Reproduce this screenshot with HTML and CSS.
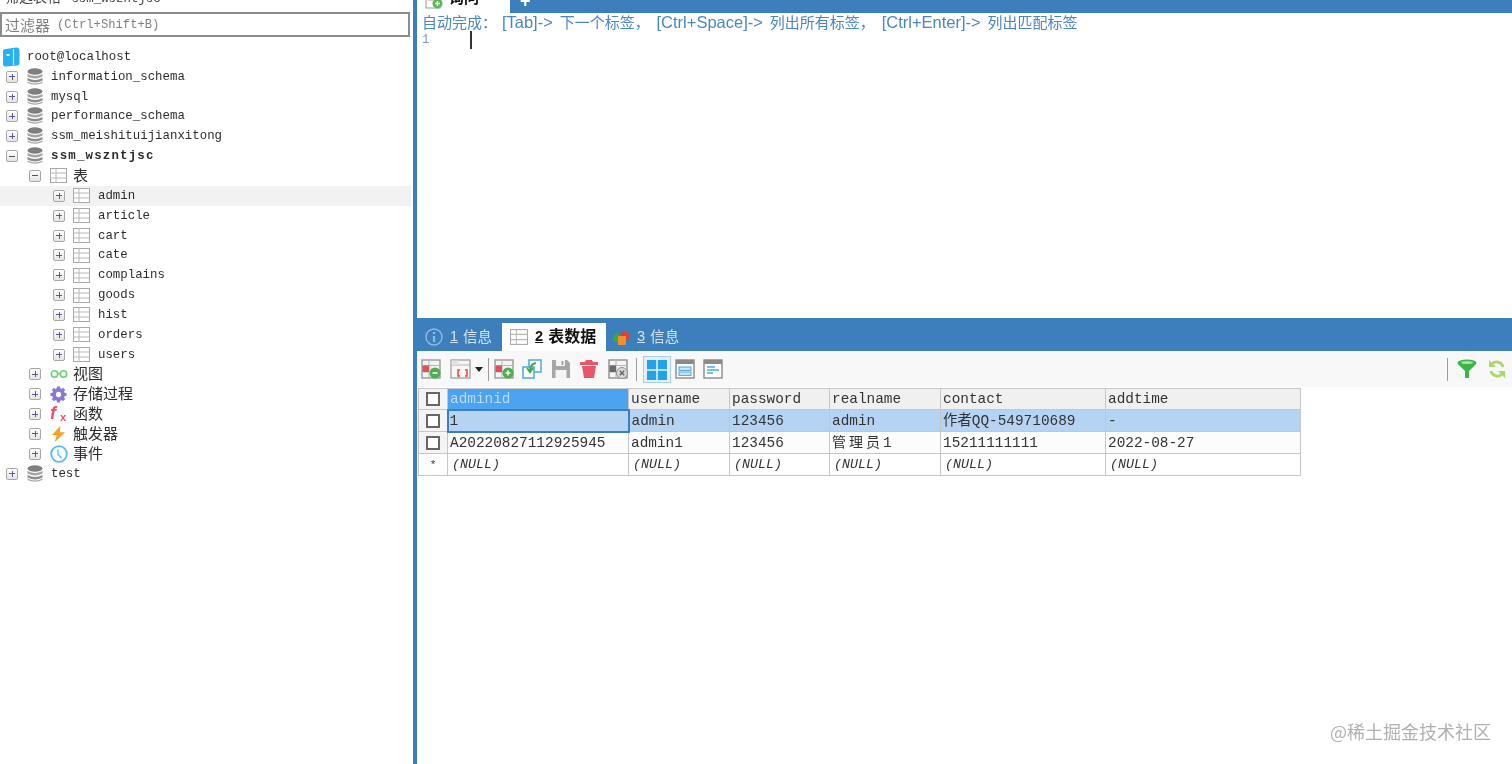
FILE: index.html
```html
<!DOCTYPE html>
<html lang="zh-CN">
<head>
  <meta charset="UTF-8" />
  <title>SQLyog</title>
  <link rel="stylesheet" href="styles.css">
</head>
<body>

  <!-- shared icons -->
  <svg class="sprites" width="0" height="0">
    <symbol id="i-server" viewBox="0 0 18 20">
      <path d="M1 4 Q1 2 4 2 L14 .6 Q17.5 .4 17.5 4 L17.5 16 Q17.5 18.5 14 18.6 L4 19.6 Q1 19.6 1 17 Z" fill="#29b0f2"/>
      <path d="M11.5 2 L11.5 18" stroke="#bfe8fb" stroke-width="1.2"/>
      <rect x="4.5" y="7" width="3" height="2" fill="#d8f2fd"/>
    </symbol>
    <symbol id="i-db" viewBox="0 0 16 18">
      <ellipse cx="8" cy="3.5" rx="7.5" ry="3.2" fill="#7f7f7f"/>
      <path d="M.5 6 Q8 10 15.5 6 V8.5 Q8 12.5 .5 8.5 Z" fill="#a3a3a3"/>
      <path d="M.5 10 Q8 14 15.5 10 V12.5 Q8 16.5 .5 12.5 Z" fill="#8c8c8c"/>
      <path d="M.5 13.5 Q8 17.5 15.5 13.5 V15 Q8 18.5 .5 15 Z" fill="#a8a8a8"/>
    </symbol>
    <symbol id="i-table" viewBox="0 0 17 15">
      <rect x=".5" y=".5" width="16" height="14" fill="#fff" stroke="#a9a9a9"/>
      <path d="M.5 5 H16.5 M.5 10 H16.5 M6 .5 V14.5" stroke="#b8b8b8" fill="none"/>
    </symbol>
    <symbol id="i-view" viewBox="0 0 18 10">
      <circle cx="4.5" cy="5" r="3.2" fill="none" stroke="#6fcf6f" stroke-width="1.6"/>
      <circle cx="13.5" cy="5" r="3.2" fill="none" stroke="#6fcf6f" stroke-width="1.6"/>
      <path d="M7.5 4.5 H10.5" stroke="#6fcf6f" stroke-width="1.4"/>
    </symbol>
    <symbol id="i-gear" viewBox="0 0 18 18">
      <circle cx="9" cy="9" r="4.8" fill="none" stroke="#8878d8" stroke-width="4"/>
      <path d="M9 .5 V4 M9 14 V17.5 M.5 9 H4 M14 9 H17.5 M3 3 L5.4 5.4 M12.6 12.6 L15 15 M15 3 L12.6 5.4 M5.4 12.6 L3 15" stroke="#8878d8" stroke-width="3.4"/>
    </symbol>
    <symbol id="i-bolt" viewBox="0 0 14 18">
      <path d="M9 0 L0 10 H5 L3 18 L14 7 H8.5 Z" fill="#f5a02c"/>
    </symbol>
    <symbol id="i-clock" viewBox="0 0 18 18">
      <circle cx="9" cy="9" r="7.8" fill="#fff" stroke="#52bdf0" stroke-width="1.8"/>
      <path d="M8 4.5 V9.5 L11.5 13" fill="none" stroke="#52bdf0" stroke-width="1.3"/>
    </symbol>
    <symbol id="i-grid" viewBox="0 0 20 20">
      <rect x="1" y="1" width="18" height="18" fill="#f4f4f4" stroke="#9a9a9a" stroke-width="1.4"/>
      <path d="M1 6.5 H19 M1 13 H19 M8 1 V19" stroke="#b5b5b5"/>
      <rect x="1.5" y="6.5" width="6.5" height="6.5" fill="#e0505a"/>
    </symbol>
  </svg>

  <div class="app">

    <aside class="sidebar">
      <div class="filter-title"><span><span class="cjk">筛选表格</span> ssm_wszntjsc</span></div>
      <div class="filter-box"><span class="cjk">过滤器</span> <span>(Ctrl+Shift+B)</span></div>

      <ul class="tree">
        <li class="node root"><svg class="ico ico-server"><use href="#i-server"/></svg><span>root@localhost</span></li>

        <li class="node lv0"><i class="exp"></i><svg class="ico ico-db"><use href="#i-db"/></svg><span>information_schema</span></li>
        <li class="node lv0"><i class="exp"></i><svg class="ico ico-db"><use href="#i-db"/></svg><span>mysql</span></li>
        <li class="node lv0"><i class="exp"></i><svg class="ico ico-db"><use href="#i-db"/></svg><span>performance_schema</span></li>
        <li class="node lv0"><i class="exp"></i><svg class="ico ico-db"><use href="#i-db"/></svg><span>ssm_meishituijianxitong</span></li>
        <li class="node lv0 current"><i class="exp open"></i><svg class="ico ico-db"><use href="#i-db"/></svg><span>ssm_wszntjsc</span></li>

        <li class="node lv1"><i class="exp open"></i><svg class="ico ico-table"><use href="#i-table"/></svg><span class="cjk">表</span></li>

        <li class="node lv2 hover"><i class="exp"></i><svg class="ico ico-table"><use href="#i-table"/></svg><span>admin</span></li>
        <li class="node lv2"><i class="exp"></i><svg class="ico ico-table"><use href="#i-table"/></svg><span>article</span></li>
        <li class="node lv2"><i class="exp"></i><svg class="ico ico-table"><use href="#i-table"/></svg><span>cart</span></li>
        <li class="node lv2"><i class="exp"></i><svg class="ico ico-table"><use href="#i-table"/></svg><span>cate</span></li>
        <li class="node lv2"><i class="exp"></i><svg class="ico ico-table"><use href="#i-table"/></svg><span>complains</span></li>
        <li class="node lv2"><i class="exp"></i><svg class="ico ico-table"><use href="#i-table"/></svg><span>goods</span></li>
        <li class="node lv2"><i class="exp"></i><svg class="ico ico-table"><use href="#i-table"/></svg><span>hist</span></li>
        <li class="node lv2"><i class="exp"></i><svg class="ico ico-table"><use href="#i-table"/></svg><span>orders</span></li>
        <li class="node lv2"><i class="exp"></i><svg class="ico ico-table"><use href="#i-table"/></svg><span>users</span></li>

        <li class="node lv1"><i class="exp"></i><svg class="ico ico-view"><use href="#i-view"/></svg><span class="cjk">视图</span></li>
        <li class="node lv1"><i class="exp"></i><svg class="ico ico-gear"><use href="#i-gear"/></svg><span class="cjk">存储过程</span></li>
        <li class="node lv1"><i class="exp"></i><svg class="ico ico-fx" viewBox="0 0 18 20"><text x="0" y="15" class="fx-f">f</text><text x="10" y="17" class="fx-x">x</text></svg><span class="cjk">函数</span></li>
        <li class="node lv1"><i class="exp"></i><svg class="ico ico-bolt"><use href="#i-bolt"/></svg><span class="cjk">触发器</span></li>
        <li class="node lv1"><i class="exp"></i><svg class="ico ico-clock"><use href="#i-clock"/></svg><span class="cjk">事件</span></li>

        <li class="node lv0"><i class="exp"></i><svg class="ico ico-db"><use href="#i-db"/></svg><span>test</span></li>
      </ul>
    </aside>

    <main class="content">
      <div class="query-tabs">
        <div class="query-tab">
          <svg class="tab-ico" viewBox="0 0 18 18">
            <rect x="1" y="1" width="14" height="15" fill="#fff" stroke="#9a9a9a"/>
            <path d="M3 5 H9 M3 8 H8" stroke="#e08a8a"/>
            <circle cx="12.5" cy="11.5" r="5" fill="#58b858"/>
            <path d="M12.5 9 V14 M10 11.5 H15" stroke="#fff" stroke-width="1.4"/>
          </svg>
          <b>询问</b>
        </div>
        <span class="tab-plus">+</span>
      </div>

      <div class="editor">
        <p class="hint">自动完成： <span class="key first">[Tab]-&gt;</span> 下一个标签， <span class="key">[Ctrl+Space]-&gt;</span> 列出所有标签， <span class="key">[Ctrl+Enter]-&gt;</span> 列出匹配标签</p>
        <div class="line"><span class="line-no">1</span><i class="caret"></i></div>
      </div>

      <div class="result-tabs">
        <div class="r-tab">
          <svg class="r-ico" viewBox="0 0 18 18"><circle cx="9" cy="9" r="8" fill="#3d7ebd" stroke="#8fb9df" stroke-width="1.4"/><path d="M9 4 V6 M9 8 V14" stroke="#7fc4ef" stroke-width="2.2"/></svg>
          <u>1</u> <span>信息</span>
        </div>
        <div class="r-tab active">
          <svg class="r-ico" viewBox="0 0 17 15"><use href="#i-table"/></svg>
          <u>2</u> <span>表数据</span>
        </div>
        <div class="r-tab">
          <svg class="r-ico" viewBox="0 0 18 18">
            <circle cx="13" cy="8" r="4.6" fill="#e0402f"/>
            <circle cx="5" cy="10" r="4" fill="#3aa845"/>
            <rect x="6" y="8" width="8" height="9" fill="#f0902a"/>
          </svg>
          <u>3</u> <span>信息</span>
        </div>
      </div>

      <div class="toolbar">
        <button class="tool"><svg viewBox="0 0 20 20"><use href="#i-grid"/><circle cx="14" cy="14" r="5.5" fill="#4cae4c"/><path d="M11.5 14 H16.5" stroke="#fff" stroke-width="1.6"/></svg></button>
        <button class="tool tool-drop"><svg viewBox="0 0 22 20"><rect x="1" y="1" width="19" height="18" fill="#f6f6f6" stroke="#a0a0a0" stroke-width="1.3"/><path d="M1 6 H20" stroke="#b5b5b5"/><rect x="1.5" y="1.5" width="7" height="4.5" fill="#e6e0e0"/><path d="M10 11 H8 V17 H10 M15 11 H17 V17 H15" fill="none" stroke="#e5463c" stroke-width="1.5"/></svg><i class="drop"></i></button>
        <i class="sep sep-tight"></i>
        <button class="tool"><svg viewBox="0 0 20 20"><use href="#i-grid"/><circle cx="14" cy="14" r="5.5" fill="#4cae4c"/><path d="M11.5 14 H16.5 M14 11.5 V16.5" stroke="#fff" stroke-width="1.6"/></svg></button>
        <button class="tool"><svg viewBox="0 0 20 20"><rect x="7" y="1" width="12" height="12" fill="#fff" stroke="#4fa8dc" stroke-width="1.5"/><rect x="1" y="8" width="11" height="11" fill="#fff" stroke="#4fa8dc" stroke-width="1.5"/><path d="M14 4 Q8 5 8 12 M5 9 L8 13 L11 9" fill="none" stroke="#3dab4f" stroke-width="2"/></svg></button>
        <button class="tool"><svg viewBox="0 0 20 20"><path d="M1 1 H16 L19 4 V19 H1 Z" fill="#a6a6a6"/><rect x="5" y="1" width="9" height="6" fill="#f4f4f4"/><rect x="10.5" y="2" width="2" height="4" fill="#a6a6a6"/><rect x="4.5" y="11" width="11" height="8" fill="#f4f4f4"/></svg></button>
        <button class="tool"><svg viewBox="0 0 20 20"><path d="M7 1 H13 L14 3 H19 V6 H1 V3 H6 Z M3 7 H17 L15 19 H5 Z" fill="#e8566a"/></svg></button>
        <button class="tool"><svg viewBox="0 0 20 20"><rect x="1" y="1" width="18" height="18" fill="#f4f4f4" stroke="#8f8f8f" stroke-width="1.4"/><path d="M1 6.5 H19 M1 13 H19 M8 1 V19" stroke="#b5b5b5"/><rect x="1.5" y="6.5" width="6.5" height="6.5" fill="#6a6a6a"/><circle cx="14" cy="14" r="5.5" fill="#d8d8d8" stroke="#8f8f8f"/><path d="M11.8 11.8 L16.2 16.2 M16.2 11.8 L11.8 16.2" stroke="#666" stroke-width="1.5"/></svg></button>
        <i class="sep sep-view"></i>
        <button class="view-btn on"><svg viewBox="0 0 20 20"><path d="M0 0 H9.2 V9.2 H0 Z M10.8 0 H20 V9.2 H10.8 Z M0 10.8 H9.2 V20 H0 Z M10.8 10.8 H20 V20 H10.8 Z" fill="#23a3e6"/></svg></button>
        <button class="view-btn"><svg viewBox="0 0 20 20"><rect x="1" y="1" width="18" height="18" fill="#fff" stroke="#8a8a8a" stroke-width="1.4"/><rect x="1" y="1" width="18" height="4" fill="#8a8a8a"/><rect x="4" y="8" width="12" height="3.4" fill="#cfe6f6" stroke="#4fa8dc"/><rect x="4" y="13" width="12" height="3.4" fill="#cfe6f6" stroke="#4fa8dc"/></svg></button>
        <button class="view-btn"><svg viewBox="0 0 20 20"><rect x="1" y="1" width="18" height="18" fill="#fff" stroke="#8a8a8a" stroke-width="1.4"/><rect x="1" y="1" width="18" height="4" fill="#8a8a8a"/><path d="M4 8 H12 M4 11 H16 M4 14 H10" stroke="#4fa8dc" stroke-width="1.4"/></svg></button>

        <div class="toolbar-right">
          <i class="sep"></i>
          <button class="tool"><svg viewBox="0 0 20 20"><ellipse cx="10" cy="4" rx="9.5" ry="3.4" fill="#39b54a"/><ellipse cx="10" cy="3.6" rx="6" ry="1.5" fill="#a9e2a9"/><path d="M1 5 L8 12 V19 L12 19 V12 L19 5 Z" fill="#39b54a"/></svg></button>
          <button class="tool tool-sync"><svg viewBox="0 0 18 20"><path d="M15 8 A6.5 6.5 0 0 0 3.5 5.5 M3 12 A6.5 6.5 0 0 0 14.5 14.5" fill="none" stroke="#a6d86a" stroke-width="2.8"/><path d="M1 1 V8 H8 Z M17 19 V12 H10 Z" fill="#a6d86a"/></svg></button>
        </div>
      </div>

      <div class="grid-wrap">
        <table class="grid">
          <colgroup>
            <col class="c-check"><col class="c-id"><col class="c-user"><col class="c-pass"><col class="c-real"><col class="c-contact"><col class="c-time">
          </colgroup>
          <thead>
            <tr>
              <th class="chk"><i class="box"></i></th>
              <th class="col-on">adminid</th>
              <th>username</th>
              <th>password</th>
              <th>realname</th>
              <th>contact</th>
              <th>addtime</th>
            </tr>
          </thead>
          <tbody>
            <tr class="row-on">
              <td class="chk"><i class="box"></i></td>
              <td class="cell-on">1</td>
              <td>admin</td>
              <td>123456</td>
              <td>admin</td>
              <td><span class="cjk">作者</span>QQ-549710689</td>
              <td>-</td>
            </tr>
            <tr class="row-plain">
              <td class="chk"><i class="box"></i></td>
              <td>A20220827112925945</td>
              <td>admin1</td>
              <td>123456</td>
              <td><span class="cjk wide">管理员</span>1</td>
              <td>15211111111</td>
              <td>2022-08-27</td>
            </tr>
            <tr class="row-new">
              <td class="chk star">*</td>
              <td>(NULL)</td>
              <td>(NULL)</td>
              <td>(NULL)</td>
              <td>(NULL)</td>
              <td>(NULL)</td>
              <td>(NULL)</td>
            </tr>
          </tbody>
        </table>
      </div>

      <div class="watermark">@稀土掘金技术社区</div>
    </main>
  </div>

</body>
</html>
```

FILE: styles.css
```css
* {
  box-sizing: border-box;
}

html, body {
  margin: 0;
  height: 100%;
  overflow: hidden;
  background: #fff;
}

body {
  font-family: "Liberation Mono", monospace;
  color: #333;
}

.sprites {
  position: absolute;
}

.cjk {
  font-family: "Noto Sans CJK SC", sans-serif;
}

.app {
  display: flex;
  height: 764px;
  filter: blur(0.35px);
}

/* Left object browser */
.sidebar {
  width: 417px;
  flex: none;
  border-right: 4px solid #3d7ebd;
  overflow: hidden;
}

.filter-title {
  height: 12px;
  padding-left: 5px;
  display: flex;
  align-items: flex-end;
  overflow: hidden;
  font-size: 12.4px;
  color: #444;
}

.filter-title > span {
  flex: none;
  height: 18px;
  line-height: 18px;
  margin-bottom: 7px;
  white-space: pre;
}

.filter-title .cjk {
  font-size: 14px;
  margin-right: 3px;
}

.filter-box {
  width: 410px;
  height: 25px;
  border: 2px solid #8c8c8c;
  padding-left: 3px;
  display: flex;
  align-items: center;
  gap: 7px;
  font-size: 12.2px;
  color: #808080;
}

.filter-box .cjk {
  font-size: 15px;
}

.tree {
  list-style: none;
  margin: 10px 0 0;
  padding: 0;
  font-size: 12.4px;
  color: #2c2c2c;
}

.node {
  height: 19.85px;
  width: 411px;
  display: flex;
  align-items: center;
  white-space: nowrap;
}

.node .cjk {
  font-size: 15px;
  line-height: 1;
  margin-bottom: 3px;
}

.node.root { padding-left: 2px; gap: 7px; }
.node.lv0 { padding-left: 6px; }
.node.lv1 { padding-left: 29px; }
.node.lv2 { padding-left: 53px; }

.node.hover {
  background: #f2f2f2;
}

.node.current span {
  font-weight: bold;
  letter-spacing: 1.2px;
}

.exp {
  flex: none;
  width: 12px;
  height: 12px;
  border: 1px solid #a8a8a8;
  border-radius: 2px;
  background: linear-gradient(#fff, #e4e4e4);
  position: relative;
}

/* the plus / minus inside an expander */
.exp::before,
.exp::after {
  content: "";
  position: absolute;
  background: #5a5a9a;
}

.exp::before { left: 2px; right: 2px; top: 4.5px; height: 1px; }
.exp::after { top: 2px; bottom: 2px; left: 4.5px; width: 1px; }
.exp.open::after { display: none; }
.exp.open::before { background: #555; }

.ico {
  flex: none;
  margin: 0 8px 0 9px;
}

.ico-server { width: 18px; height: 20px; margin: 0; }
.ico-db { width: 16px; height: 18px; }
.ico-table { width: 17px; height: 15px; margin-left: 8px; margin-right: 8px; }
.lv1 .ico-table { margin-left: 9px; margin-right: 6px; }
.ico-view { width: 18px; height: 10px; margin-left: 9px; margin-right: 5px; }
.ico-gear { width: 17px; height: 17px; margin-left: 9px; margin-right: 6px; }
.ico-fx { width: 18px; height: 20px; margin-left: 9px; margin-right: 5px; overflow: visible; }
.ico-bolt { width: 13px; height: 18px; margin-left: 11px; margin-right: 8px; }
.ico-clock { width: 18px; height: 18px; margin-left: 9px; margin-right: 5px; }

.fx-f {
  font: italic bold 18px "Liberation Sans", sans-serif;
  fill: #e8506e;
}

.fx-x {
  font: bold 11px "Liberation Sans", sans-serif;
  fill: #e8506e;
}

/* Query editor */
.content {
  flex: 1;
  min-width: 0;
  display: flex;
  flex-direction: column;
  position: relative;
}

.query-tabs {
  height: 13px;
  flex: none;
  background: #3d7ebd;
  display: flex;
  align-items: flex-end;
  overflow: hidden;
}

.query-tab {
  width: 93px;
  height: 20px;
  flex: none;
  background: #fff;
  padding: 0 0 0 8px;
  display: flex;
  align-items: flex-end;
  gap: 6px;
  font: 15px/20px "Noto Sans CJK SC", sans-serif;
  color: #111;
}

.query-tab b {
  margin-bottom: 6px;
}

.tab-ico {
  width: 18px;
  height: 18px;
  flex: none;
  margin-bottom: 3px;
}

.tab-plus {
  flex: none;
  margin-left: 10px;
  margin-bottom: 3px;
  color: #fff;
  font: bold 18px/18px "Liberation Sans", sans-serif;
}

.editor {
  height: 305px;
  flex: none;
  padding: 0 0 0 5px;
}

.hint {
  margin: 0;
  height: 18px;
  font: 15px/17px "Noto Sans CJK SC", sans-serif;
  word-spacing: 3.5px;
  color: #4a86c4;
  white-space: nowrap;
}

.key {
  font-family: "Liberation Sans", sans-serif;
  font-size: 16.5px;
}

.key.first {
  margin-left: -2px;
}

.line {
  height: 18px;
  display: flex;
  font-size: 12.4px;
  line-height: 18px;
  color: #7a9ccc;
}

.line-no {
  width: 48px;
  flex: none;
}

.caret {
  width: 1.5px;
  height: 18px;
  background: #333;
}

/* Result panel */
.result-tabs {
  height: 33px;
  flex: none;
  background: #3d7ebd;
  display: flex;
  align-items: flex-end;
  font: 14.5px "Noto Sans CJK SC", sans-serif;
}

.r-tab {
  height: 28px;
  display: flex;
  align-items: center;
  gap: 7px;
  padding: 0 10px 0 8px;
  color: #d5e4f2;
  white-space: nowrap;
}

.r-tab span {
  margin-bottom: 4px;
}

.r-tab u {
  font-family: "Liberation Sans", sans-serif;
  margin-right: -2px;
  margin-bottom: 3px;
}

.r-tab.active {
  width: 104px;
  background: #fff;
  color: #111;
  font-weight: bold;
  padding: 0 8px;
}

.r-tab.active span {
  font-size: 16px;
}

.r-tab.active + .r-tab {
  padding-left: 6px;
}

.r-ico {
  width: 18px;
  height: 18px;
  flex: none;
}

.toolbar {
  height: 36px;
  flex: none;
  background: #f8f8f8;
  display: flex;
  align-items: center;
  padding-left: 4px;
  gap: 8px;
}

.tool {
  border: 0;
  padding: 0;
  background: none;
  width: 20.5px;
  height: 20px;
  flex: none;
  display: flex;
}

.tool svg {
  width: 20px;
  height: 20px;
}

.tool-drop {
  width: 30px;
  align-items: center;
  gap: 3px;
}

.tool-drop svg {
  width: 22px;
  flex: none;
}

.drop {
  flex: none;
  width: 0;
  height: 0;
  border-left: 4px solid transparent;
  border-right: 4px solid transparent;
  border-top: 5px solid #222;
}

.sep {
  width: 1px;
  height: 23px;
  background: #9c9c9c;
  flex: none;
}

.sep-tight { margin-right: -3px; }
.sep-view { margin-right: -2px; }

.view-btn {
  width: 20px;
  height: 20px;
  flex: none;
  padding: 0;
  border: 0;
  background: none;
  display: flex;
}

.view-btn svg {
  width: 20px;
  height: 20px;
}

.view-btn.on {
  width: 28px;
  height: 27px;
  padding: 3px 3px;
  margin-right: -4px;
  border: 1px solid #a9cdee;
  background: #e3f0fb;
}

.toolbar-right {
  margin-left: auto;
  display: flex;
  align-items: center;
  gap: 9px;
  padding-right: 6px;
}

.tool-sync {
  width: 18px;
  margin-left: 2px;
}

/* Data grid */
.grid-wrap {
  padding: 1px 0 0 1px;
}

.grid {
  border-collapse: collapse;
  table-layout: fixed;
  width: 882px;
  font-size: 14.4px;
  line-height: 16px;
  color: #333;
}

.c-check { width: 29px; }
.c-id { width: 181px; }
.c-user { width: 101px; }
.c-pass { width: 100px; }
.c-real { width: 111px; }
.c-contact { width: 165px; }
.c-time { width: 195px; }

.grid th,
.grid td {
  border: 1px solid #c6c6c6;
  padding: 0 2px;
  text-align: left;
  font-weight: normal;
  white-space: nowrap;
  overflow: hidden;
}

.grid th {
  height: 21px;
  background: #f0f0f0;
}

.grid td {
  height: 22px;
}

.grid .col-on {
  background: #4ba3f2;
  color: #bcdcf7;
}

.row-on td {
  background: #b5d4f4;
}

.grid td.cell-on {
  border: 2px solid #3d7ebd;
  padding-left: 1px;
}

.row-plain td {
  background: #fcfcfc;
}

.row-new td {
  font-style: italic;
  font-size: 13.3px;
  padding-left: 4px;
  background: #fff;
}

.grid .chk {
  text-align: center;
  background: #f4f4f4;
  padding: 0;
}

.box {
  display: block;
  width: 14px;
  height: 14px;
  margin: 0 auto;
  border: 2px solid #666;
  background: #fff;
}

.grid .star {
  background: #fff;
  font-size: 11px;
  font-style: normal;
}

.grid .cjk {
  line-height: 1;
}

.cjk.wide {
  letter-spacing: 3px;
  font-size: 14px;
}

.watermark {
  position: absolute;
  right: 21px;
  bottom: 20px;
  font: 18px "Noto Sans CJK SC", sans-serif;
  color: #b0b0b0;
}
```
